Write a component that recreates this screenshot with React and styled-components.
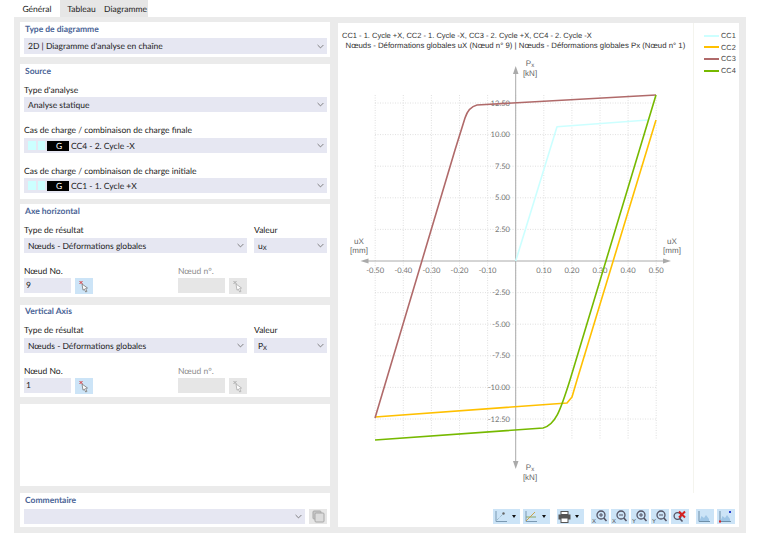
import React from "react";
import styled, { createGlobalStyle } from "styled-components";

const GlobalStyle = createGlobalStyle`
  html, body {
    margin: 0;
    padding: 0;
    background: #fff;
  }
  body {
    font-family: "Lato", "Open Sans", sans-serif;
    font-size: 8.5px;
    color: #222;
    text-rendering: geometricPrecision;
  }
`;

const Page = styled.div`
  width: 760px;
  height: 533px;
  overflow: hidden;
  padding-left: 14px;
  box-sizing: border-box;
`;

const Tabs = styled.div`
  display: flex;
  height: 17px;
  padding-left: 3px;
`;

const Tab = styled.div`
  width: ${(p) => p.$w}px;
  margin-right: ${(p) => (p.$active ? "3px" : "0")};
  text-align: center;
  line-height: 18px;
  background: ${(p) => (p.$active ? "#fff" : "#e6e6e6")};
`;

const Body = styled.div`
  width: 732px;
  height: 516px;
  background: #ebebeb;
  box-sizing: border-box;
  padding: 5px 7px 6px 6px;
  display: flex;
  gap: 8px;
`;

const Left = styled.div`
  width: 310px;
  display: flex;
  flex-direction: column;
`;

const Card = styled.section`
  background: #fff;
  box-sizing: border-box;
  height: ${(p) => p.$h}px;
  margin-top: ${(p) => p.$gap || 0}px;
  padding: ${(p) => p.$pad ?? 1}px 3px 0 4px;
  flex-shrink: 0;
`;

const CardTitle = styled.div`
  color: #4a6496;
  font-weight: 700;
  height: 13px;
  line-height: 13px;
  padding-left: 1px;
`;

const Label = styled.div`
  height: 12px;
  line-height: 12px;
  margin-top: ${(p) => p.$top || 0}px;
  color: ${(p) => (p.$off ? "#8d8d8d" : "#222")};
`;

const Select = styled.div`
  height: ${(p) => p.$h || 15}px;
  background: #e6e7f2;
  display: flex;
  align-items: center;
  padding: 0 3px 0 4px;
  box-sizing: border-box;
  flex: ${(p) => (p.$grow ? "1" : "none")};
  margin-top: ${(p) => p.$top || 0}px;
`;

const SelectText = styled.span`
  flex: 1;
  white-space: nowrap;
`;

const Chevron = () => (
  <svg width="7" height="5" viewBox="0 0 7 5">
    <path d="M.6 1 3.5 3.9 6.4 1" fill="none" stroke="#666" strokeWidth=".8" />
  </svg>
);

const Swatch = styled.span`
  width: 7.5px;
  height: 9px;
  margin-right: 2px;
  background: #ccffff;
`;

const Badge = styled.span`
  width: 22px;
  height: 10px;
  line-height: 10px;
  margin-right: 2px;
  background: #000;
  color: #fff;
  text-align: center;
  padding-left: 2px;
  box-sizing: border-box;
`;

const Columns = styled.div`
  display: flex;
  justify-content: space-between;
  margin-top: ${(p) => p.$top || 0}px;
`;

const Column = styled.div`
  width: ${(p) => p.$w}px;
`;

const NodeRow = styled.div`
  display: flex;
  gap: 4px;
  margin-top: 1px;
`;

const NodeInput = styled.div`
  width: 47px;
  height: 15px;
  line-height: 15px;
  padding-left: 2px;
  box-sizing: border-box;
  background: ${(p) => (p.$off ? "#e6e6e6" : "#e6e7f2")};
`;

const PickButton = styled.div`
  width: 18px;
  height: 16px;
  background: ${(p) => (p.$off ? "#e6e6e6" : "#cce4f7")};
  display: flex;
  align-items: center;
  justify-content: center;
`;

const Sub = styled.sub`
  font-size: 6px;
  line-height: 0;
  vertical-align: -1px;
`;

const PickIcon = ({ off }) => (
  <svg width="12" height="13" viewBox="0 0 12 13">
    <path d="M4 4 9.5 8 7.6 8.4 9 11.4 7.7 12 6.4 9.1 5 10.2Z" fill="#fff" stroke={off ? "#aaa" : "#777"} strokeWidth=".8" />
    <path d="M1.5 1 4.5 4M4.5 1 1.5 4" stroke={off ? "#aaa" : "#d83a3a"} strokeWidth="1" />
  </svg>
);

const CommentRow = styled.div`
  display: flex;
  gap: 4px;
  margin-top: 2px;
`;

const CopyButton = styled.div`
  width: 18px;
  height: 15px;
  background: #e6e6e6;
  display: flex;
  align-items: center;
  justify-content: center;
`;

const Right = styled.div`
  flex: 1;
  display: flex;
  flex-direction: column;
  background: #fff;
  margin-top: 1px;
`;

const ChartRow = styled.div`
  display: flex;
  height: 470px;
`;

const ChartArea = styled.div`
  width: 355px;
  height: 470px;
  border-right: 1.5px solid #f4f4ee;
`;

const Legend = styled.div`
  flex: 1;
  padding: 7px 0 0 10px;
`;

const LegendRow = styled.div`
  display: flex;
  align-items: center;
  gap: 2px;
  height: 11.6px;
  font-family: "Liberation Sans", sans-serif;
  font-size: 7.4px;
  color: #444;
`;

const LegendLine = styled.span`
  width: 15px;
  height: 2px;
  background: ${(p) => p.$c};
`;

const Toolbar = styled.div`
  display: flex;
  align-items: flex-start;
  padding: 16px 0 0 155px;
`;

const ToolButton = styled.div`
  height: 15px;
  width: ${(p) => p.$w || 18}px;
  margin-left: ${(p) => p.$gap ?? 2}px;
  background: #cce4f7;
  display: flex;
  align-items: center;
  padding-left: 1px;
  box-sizing: border-box;
`;

const Caret = styled.span`
  width: 0;
  height: 0;
  margin-left: 4px;
  border-left: 2.5px solid transparent;
  border-right: 2.5px solid transparent;
  border-top: 3px solid #111;
`;

const xAt = (v) => 515.7 + v * 281;
const yAt = (v) => 261 - v * 12.64;
const ox = 338;
const oy = 23;

const xTicks = [-0.5, -0.4, -0.3, -0.2, -0.1, 0.1, 0.2, 0.3, 0.4, 0.5];
const yTicks = [12.5, 10, 7.5, 5, 2.5, -2.5, -5, -7.5, -10, -12.5];
const vGrid = [-0.5, -0.4, -0.3, -0.2, -0.1, 0, 0.1, 0.2, 0.3, 0.4, 0.5];

const curves = [
  { c: "#ccffff", d: "M515.7 261 557 126.7 648 120" },
  { c: "#ffc000", d: "M656 120 577 380 572 397 567 403 375 417" },
  { c: "#b06a6a", d: "M375 418 455 150 465 118Q468.5 107 477 105L656 95" },
  { c: "#76b900", d: "M656 95 570 380C560 412 555 425 543 428L375 440" },
];

const Chart = () => (
  <svg width="355" height="470" viewBox={`${ox} ${oy} 355 470`}>
    <g fontFamily="Liberation Sans, sans-serif" fill="#333">
      <text x="342" y="38" fontSize="7.5">CC1 - 1. Cycle +X, CC2 - 1. Cycle -X, CC3 - 2. Cycle +X, CC4 - 2. Cycle -X</text>
      <text x="345.5" y="47.5" fontSize="7.8">Nœuds - Déformations globales uX (Nœud n° 9) | Nœuds - Déformations globales Px (Nœud n° 1)</text>
    </g>
    <g stroke="#d8d8d8" strokeWidth=".8" strokeDasharray="1 1.5">
      {vGrid.map((v) => (
        <line key={v} x1={xAt(v)} x2={xAt(v)} y1="95" y2="440" />
      ))}
      {yTicks.map((v) => (
        <line key={v} x1="375" x2="656" y1={yAt(v)} y2={yAt(v)} />
      ))}
    </g>
    <g stroke="#aaa" strokeWidth="1">
      <line x1="515.7" x2="515.7" y1="72" y2="462" />
      <line x1="366" x2="666" y1="261" y2="261" />
    </g>
    <g fill="#aaa">
      <path d="M515.7 66 518.5 74 513 74Z" />
      <path d="M515.7 469 518.5 461 513 461Z" />
      <path d="M360.5 261 368.5 258.5 368.5 263.5Z" />
      <path d="M671 261 663 258.5 663 263.5Z" />
    </g>
    <g fontSize="7.6" fill="#777" textAnchor="middle">
      {xTicks.map((v) => (
        <text key={v} x={xAt(v)} y="273">{v.toFixed(2)}</text>
      ))}
    </g>
    <g fontSize="7.6" fill="#777" textAnchor="end">
      {yTicks.map((v) => (
        <text key={v} x="510" y={yAt(v) + 2.5}>{v.toFixed(2)}</text>
      ))}
    </g>
    <g fontFamily="Liberation Sans, sans-serif" fontSize="8" fill="#666" textAnchor="middle">
      <text x="530" y="66">P<tspan fontSize="6" dy="1">x</tspan></text>
      <text x="530" y="76">[kN]</text>
      <text x="530" y="469.5">P<tspan fontSize="6" dy="1">x</tspan></text>
      <text x="530" y="479.5">[kN]</text>
      <text x="359" y="243.5">uX</text>
      <text x="359" y="253">[mm]</text>
      <text x="672" y="243.5">uX</text>
      <text x="672" y="253">[mm]</text>
    </g>
    {curves.map((k) => (
      <path key={k.c} d={k.d} fill="none" stroke={k.c} strokeWidth="1.6" strokeLinejoin="round" />
    ))}
  </svg>
);

const AxisIcon = ({ kind }) => (
  <svg width="14" height="13" viewBox="0 0 14 13" fill="none">
    <path d="M2 1V11.5H13" stroke="#7b9ab3" strokeWidth="1" />
    {kind === "point" && <path d="M3 10 9 4" stroke="#8ab" strokeDasharray="1 1" />}
    {kind === "point" && <circle cx="9.5" cy="3.5" r="1.2" fill="#666" />}
    {kind === "line" && <path d="M2 7H12" stroke="#8aa66a" />}
    {kind === "line" && <path d="M2 11 11 2" stroke="#c9a24a" />}
  </svg>
);

const PrintIcon = () => (
  <svg width="13" height="12" viewBox="0 0 13 12">
    <rect x="3" y=".5" width="7" height="3" fill="#fff" stroke="#555" />
    <rect x=".5" y="3.5" width="12" height="5" fill="#555" />
    <rect x="3" y="7" width="7" height="4.5" fill="#fff" stroke="#555" />
  </svg>
);

const ZoomIcon = ({ axis, plus }) => (
  <svg width="16" height="14" viewBox="0 0 16 14" fill="none">
    <circle cx="9" cy="5" r="4" stroke="#556" strokeWidth="1.3" />
    <path d="M11.8 8 14.5 11" stroke="#556" strokeWidth="1.6" />
    <path d={plus ? "M7 5H11M9 3V7" : "M7 5H11"} stroke="#556" />
    <text x="0" y="13" fontFamily="Liberation Sans, sans-serif" fontSize="6" fill="#555">{axis}</text>
  </svg>
);

const ResetIcon = () => (
  <svg width="15" height="13" viewBox="0 0 15 13" fill="none">
    <circle cx="5.5" cy="6" r="3.4" stroke="#556" strokeWidth="1.3" />
    <path d="M8 8.8 10.5 11.5" stroke="#556" strokeWidth="1.6" />
    <path d="M7 1.5 13 7.5M13 1.5 7 7.5" stroke="#d62020" strokeWidth="2" />
  </svg>
);

const AreaIcon = ({ dots }) => (
  <svg width="14" height="13" viewBox="0 0 14 13" fill="none">
    <path d="M2.5 11 4.5 6 7 8 9 5 12 9V11Z" fill="#9fc6e6" />
    <path d="M2 1V11.5H13" stroke="#6f8fa8" />
    {dots && <rect x="11" y="1" width="2" height="2" fill="#2a3fd0" />}
    {dots && <rect x="1" y="10.5" width="2" height="2" fill="#e02020" />}
  </svg>
);

const CopyIcon = () => (
  <svg width="13" height="13" viewBox="0 0 13 13">
    <rect x="1" y="1" width="8" height="8" rx="1" fill="#c8c8c8" stroke="#a8a8a8" />
    <rect x="3" y="3" width="9" height="9" rx="1" fill="#dcdcdc" stroke="#a8a8a8" />
  </svg>
);

const ChargeSelect = ({ label, top }) => (
  <Select $top={top}>
    <Swatch />
    <Swatch />
    <Badge>G</Badge>
    <SelectText>{label}</SelectText>
    <Chevron />
  </Select>
);

const AxisCard = ({ title, node, value, sub, h, gap, pad }) => (
  <Card $h={h} $gap={gap} $pad={pad}>
    <CardTitle>{title}</CardTitle>
    <Columns $top={6}>
      <Column $w={223}>
        <Label>Type de résultat</Label>
        <Select $top={2}>
          <SelectText>Nœuds - Déformations globales</SelectText>
          <Chevron />
        </Select>
      </Column>
      <Column $w={73}>
        <Label>Valeur</Label>
        <Select $top={2}>
          <SelectText>{value}<Sub>{sub}</Sub></SelectText>
          <Chevron />
        </Select>
      </Column>
    </Columns>
    <Columns $top={12}>
      <Column $w={152}>
        <Label>Nœud No.</Label>
        <NodeRow>
          <NodeInput>{node}</NodeInput>
          <PickButton><PickIcon /></PickButton>
        </NodeRow>
      </Column>
      <Column $w={149}>
        <Label $off>Nœud n°.</Label>
        <NodeRow>
          <NodeInput $off />
          <PickButton $off><PickIcon off /></PickButton>
        </NodeRow>
      </Column>
    </Columns>
  </Card>
);

export default function App() {
  return (
    <Page>
      <GlobalStyle />
      <Tabs>
        <Tab $active $w={40}>Général</Tab>
        <Tab $w={43}>Tableau</Tab>
        <Tab $w={45}>Diagramme</Tab>
      </Tabs>
      <Body>
        <Left>
          <Card $h={35}>
            <CardTitle>Type de diagramme</CardTitle>
            <Select $top={2} $h={16}>
              <SelectText>2D | Diagramme d'analyse en chaîne</SelectText>
              <Chevron />
            </Select>
          </Card>
          <Card $h={135} $gap={7}>
            <CardTitle>Source</CardTitle>
            <Label $top={6}>Type d'analyse</Label>
            <Select $top={1}>
              <SelectText>Analyse statique</SelectText>
              <Chevron />
            </Select>
            <Label $top={12}>Cas de charge / combinaison de charge finale</Label>
            <ChargeSelect label="CC4 - 2. Cycle -X" top={2} />
            <Label $top={12}>Cas de charge / combinaison de charge initiale</Label>
            <ChargeSelect label="CC1 - 1. Cycle +X" top={1} />
          </Card>
          <AxisCard title="Axe horizontal" node="9" value="u" sub="X" h={93} gap={5} />
          <AxisCard title="Vertical Axis" node="1" value="P" sub="X" h={92} gap={8} pad={0} />
          <Card $h={82} $gap={7} />
          <Card $h={34} $gap={7}>
            <CardTitle>Commentaire</CardTitle>
            <CommentRow>
              <Select $grow>
                <SelectText />
                <Chevron />
              </Select>
              <CopyButton><CopyIcon /></CopyButton>
            </CommentRow>
          </Card>
        </Left>
        <Right>
          <ChartRow>
            <ChartArea><Chart /></ChartArea>
            <Legend>
              <LegendRow><LegendLine $c="#ccffff" />CC1</LegendRow>
              <LegendRow><LegendLine $c="#ffc000" />CC2</LegendRow>
              <LegendRow><LegendLine $c="#b06a6a" />CC3</LegendRow>
              <LegendRow><LegendLine $c="#76b900" />CC4</LegendRow>
            </Legend>
          </ChartRow>
          <Toolbar>
            <ToolButton $w={27} $gap={0}><AxisIcon kind="point" /><Caret /></ToolButton>
            <ToolButton $w={27} $gap={3}><AxisIcon kind="line" /><Caret /></ToolButton>
            <ToolButton $w={27} $gap={7}><PrintIcon /><Caret /></ToolButton>
            <ToolButton $gap={7}><ZoomIcon axis="X" plus /></ToolButton>
            <ToolButton><ZoomIcon axis="X" /></ToolButton>
            <ToolButton><ZoomIcon axis="Y" plus /></ToolButton>
            <ToolButton><ZoomIcon axis="Y" /></ToolButton>
            <ToolButton><ResetIcon /></ToolButton>
            <ToolButton $gap={7}><AreaIcon /></ToolButton>
            <ToolButton $gap={3}><AreaIcon dots /></ToolButton>
          </Toolbar>
        </Right>
      </Body>
    </Page>
  );
}
